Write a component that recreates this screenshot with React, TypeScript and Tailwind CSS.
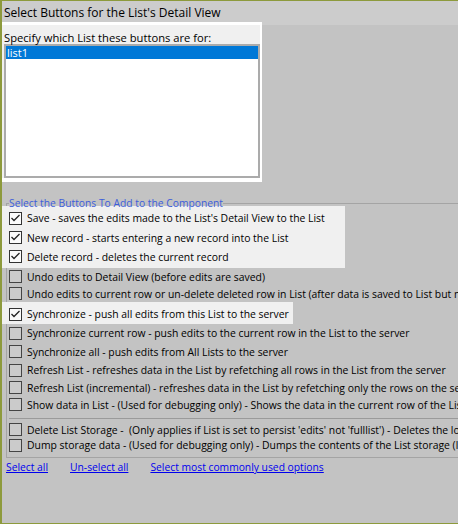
import React from "react";

function Check({ checked }: { checked: boolean }) {
  return (
    <span
      className={
        checked
          ? "flex h-[13px] w-[13px] shrink-0 items-center justify-center border border-[#333333] bg-[#fbfbfb]"
          : "flex h-[13px] w-[13px] shrink-0 items-center justify-center border border-[#444444] bg-[#cbcbcb]"
      }
    >
      {checked && (
        <svg width="11" height="11" viewBox="0 0 11 11">
          <path d="M1.5 5 L4 7.5 L9.5 2" fill="none" stroke="#222222" strokeWidth="1.3" />
        </svg>
      )}
    </span>
  );
}

function Row({ text, checked = false, h }: { text: string; checked?: boolean; h: string }) {
  return (
    <div className={"flex items-center whitespace-pre " + h}>
      <Check checked={checked} />
      <span className="ml-[5px] leading-[14px]">{text}</span>
    </div>
  );
}

export default function App() {
  return (
    <div className="h-[524px] w-[458px] overflow-hidden border-b border-l-2 border-t border-[#8d9a3c] bg-[#c3c3c3] font-['Open_Sans',sans-serif] text-[10.4px] text-black">
      <div className="flex h-[24px] items-center bg-[#cccccc] pl-[2px] text-[12px] leading-none">
        Select Buttons for the List's Detail View
      </div>

      <div className="-mt-[3px] w-[260px] border-b-[4px] border-r-2 border-t-[3px] border-white bg-[#f0f0f0] pl-[2px]">
        <div className="pt-[6px] text-[11.2px] leading-[13px]">Specify which List these buttons are for:</div>
        <div className="h-[134px] border-2 border-[#ababab] bg-white">
          <div className="h-[13px] bg-[#0078d7] pl-[1px] text-[11px] leading-[13px] text-white">list1</div>
        </div>
      </div>

      <fieldset className="ml-[4px] mt-[14px] w-[700px] border border-[#a4a4a4] pb-[4px] pl-[2px]">
        <legend className="h-[14px] text-[10.3px] leading-[14px] text-[#3c5ddb]">
          Select the Buttons To Add to the Component
        </legend>

        <div className="-ml-[7px] -mt-[4px] w-[343px] bg-[#f0f0f0] pb-[2px] pl-[7px] pt-[2px]">
          <Row checked h="h-[20px]" text="Save - saves the edits made to the List's Detail View to the List" />
          <Row checked h="h-[19px]" text="New record - starts entering a new record into the List" />
          <Row checked h="h-[19px]" text="Delete record - deletes the current record" />
        </div>
        <Row h="h-[17px]" text="Undo edits to Detail View (before edits are saved)" />
        <Row
          h="h-[17px]"
          text="Undo edits to current row or un-delete deleted row in List (after data is saved to List but not yet saved to the server)"
        />
        <div className="-ml-[7px] w-[291px] bg-[#f0f0f0] pl-[7px] pt-[2px]">
          <Row checked h="h-[20px]" text="Synchronize - push all edits from this List to the server" />
        </div>
        <Row h="h-[18px]" text="Synchronize current row - push edits to the current row in the List to the server" />
        <Row h="h-[19px]" text="Synchronize all - push edits from All Lists to the server" />
        <Row h="h-[18px]" text="Refresh List - refreshes data in the List by refetching all rows in the List from the server" />
        <Row
          h="h-[17px]"
          text="Refresh List (incremental) - refreshes data in the List by refetching only the rows on the server that have changed"
        />
        <Row
          h="h-[17px]"
          text="Show data in List - (Used for debugging only) - Shows the data in the current row of the List"
        />
        <div className="mt-[5px] h-px bg-[#9a9a9a]" />
        <div className="mt-[3px]">
          <Row
            h="h-[15px]"
            text="Delete List Storage -  (Only applies if List is set to persist 'edits' not 'fulllist') - Deletes the local storage"
          />
          <Row
            h="h-[16px]"
            text="Dump storage data - (Used for debugging only) - Dumps the contents of the List storage (local storage) to the console"
          />
        </div>
      </fieldset>

      <div className="mt-[1px] flex h-[16px] gap-[22px] pl-[4px] text-[10.3px] leading-[16px] text-[#0000ee]">
        <a className="underline">Select all</a>
        <a className="underline">Un-select all</a>
        <a className="underline">Select most commonly used options</a>
      </div>
    </div>
  );
}
